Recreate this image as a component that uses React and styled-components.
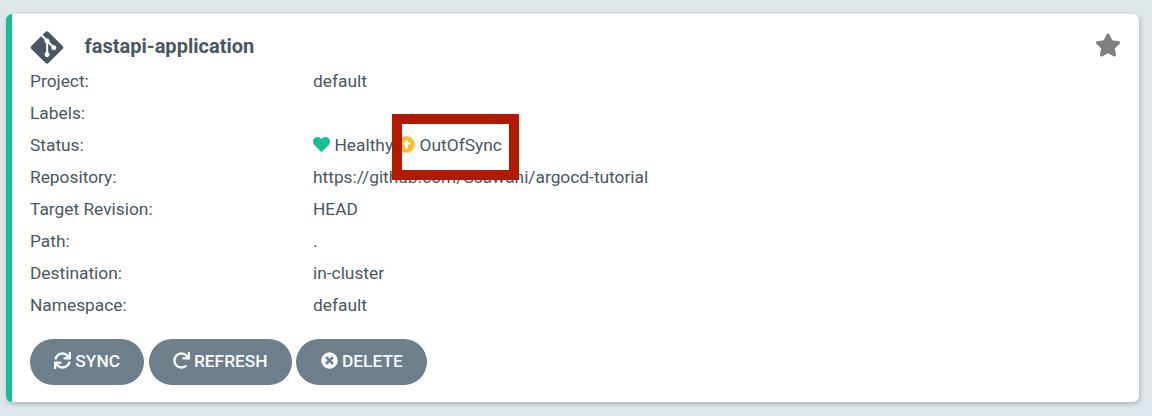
import React from 'react';
import styled, { createGlobalStyle } from 'styled-components';
import { FaGitAlt, FaStar, FaHeart, FaArrowAltCircleUp, FaSync, FaRedo, FaTimesCircle } from 'react-icons/fa';

const GlobalStyle = createGlobalStyle`
  * { box-sizing: border-box; }
  body {
    margin: 0;
    background: #dee6ea;
    font-family: Roboto, sans-serif;
    color: #495763;
  }
`;

const Page = styled.main`
  height: 416px;
  padding: 14px 13px 14px 6px;
  overflow: hidden;
`;

const Card = styled.article`
  position: relative;
  height: 388px;
  padding: 17px 18px 0 18px;
  border-left: 6px solid #18be94;
  border-radius: 6px;
  background: #fff;
  box-shadow: 1px 2px 4px rgba(90, 110, 120, 0.4);
`;

const Header = styled.header`
  display: flex;
  align-items: center;
  height: 34px;
  svg { flex: none; }
`;

const GitIcon = styled(FaGitAlt)`
  width: 34px;
  height: 37px;
  margin-top: -2px;
`;

const Title = styled.h2`
  flex: 1;
  margin: -5px 0 0 20.5px;
  font-size: 20.05px;
  line-height: 24px;
  font-weight: 700;
`;

const StarIcon = styled(FaStar)`
  width: 26px;
  height: 24px;
  margin-top: -6px;
  color: #808080;
`;

const Details = styled.dl`
  display: grid;
  grid-template-columns: 283px 1fr;
  grid-auto-rows: 32px;
  margin: 0;
  font-size: 17.33px;
  line-height: 32px;
`;

const Label = styled.dt`
  white-space: nowrap;
`;

const Value = styled.dd`
  display: flex;
  align-items: center;
  margin: 0;
  white-space: nowrap;
`;

const Status = styled.span`
  display: flex;
  align-items: center;
  margin-right: 5px;
  svg {
    width: 17px;
    height: 17px;
    margin: -1px 4.5px 0 0;
    color: ${(p) => p.$color};
  }
`;

const Highlight = styled.div`
  position: absolute;
  left: 380px;
  top: 100px;
  width: 127px;
  height: 66px;
  border: 10px solid #b31900;
`;

const Actions = styled.footer`
  display: flex;
  margin-top: 18px;
`;

const Button = styled.button`
  display: flex;
  align-items: center;
  justify-content: center;
  gap: 4.4px;
  width: ${(p) => p.$width}px;
  height: 46px;
  margin-right: 4.6px;
  padding: 0 0 3px;
  border: 0;
  border-radius: 23px;
  background: #6d7f8b;
  color: #f8fbfb;
  font: 500 17.33px Roboto, sans-serif;
  svg { width: 17px; height: 17px; }
`;

export default function App() {
  return (
    <>
      <GlobalStyle />
      <Page>
        <Card>
          <Header>
            <GitIcon />
            <Title>fastapi-application</Title>
            <StarIcon />
          </Header>
          <Details>
            <Label>Project:</Label>
            <Value>default</Value>
            <Label>Labels:</Label>
            <Value />
            <Label>Status:</Label>
            <Value>
              <Status $color="#18be94"><FaHeart />Healthy</Status>
              <Status $color="#f4c030"><FaArrowAltCircleUp />OutOfSync</Status>
            </Value>
            <Label>Repository:</Label>
            <Value>https://github.com/Ssawani/argocd-tutorial</Value>
            <Label>Target Revision:</Label>
            <Value>HEAD</Value>
            <Label>Path:</Label>
            <Value>.</Value>
            <Label>Destination:</Label>
            <Value>in-cluster</Value>
            <Label>Namespace:</Label>
            <Value>default</Value>
          </Details>
          <Actions>
            <Button $width={114}><FaSync />SYNC</Button>
            <Button $width={143}><FaRedo />REFRESH</Button>
            <Button $width={131}><FaTimesCircle />DELETE</Button>
          </Actions>
          <Highlight />
        </Card>
      </Page>
    </>
  );
}
